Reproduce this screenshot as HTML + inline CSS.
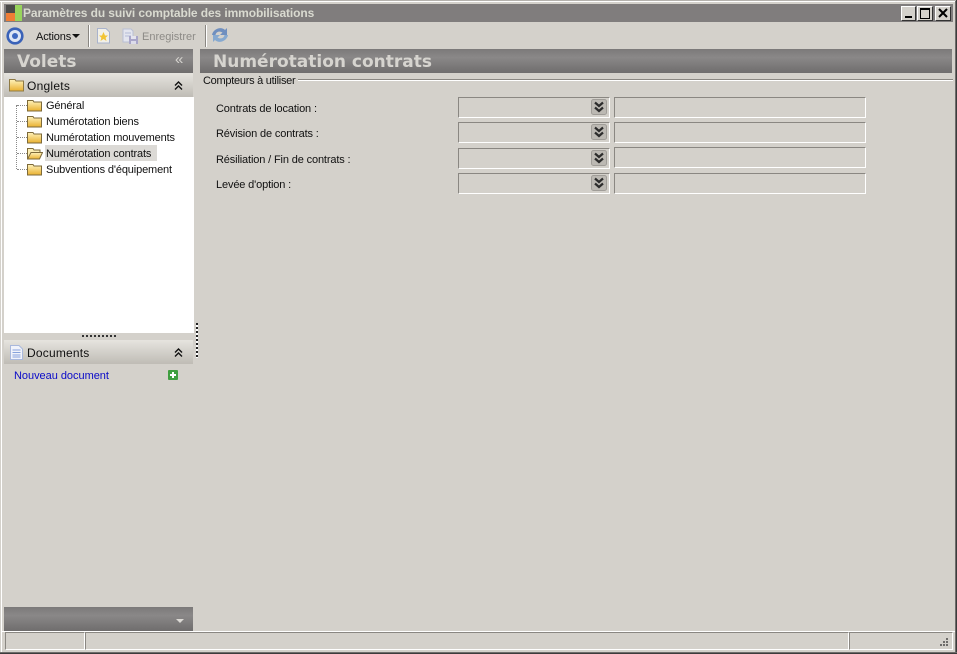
<!DOCTYPE html>
<html><head><meta charset="utf-8">
<style>
html,body{margin:0;padding:0;width:957px;height:654px;overflow:hidden;background:#d4d1cb}
body{position:relative;font-family:"Liberation Sans",sans-serif;font-size:11px;letter-spacing:-.14px;color:#111}
.a{position:absolute}
.t{position:absolute;white-space:nowrap;line-height:14px}
.f{position:absolute;box-sizing:border-box;height:21px;border-top:1px solid #8a8782;border-left:1px solid #8a8782;border-right:1px solid #fff;border-bottom:1px solid #fff}
.hd{position:absolute;background:linear-gradient(#7b7979,#8a8888 35%,#6f6d6d)}
.lt{position:absolute;background:linear-gradient(#e6e4df,#bfbcb5)}
.wb{position:absolute;box-sizing:border-box;width:15px;height:15px;top:6px;background:#d4d1cb;border:1px solid;border-color:#fff #333 #333 #fff}
.sb{position:absolute;top:632px;height:18px;box-sizing:border-box;border-top:1px solid #8a8782;border-left:1px solid #8a8782;border-right:1px solid #fff;border-bottom:1px solid #fff}
.big{font-family:"DejaVu Sans",sans-serif;font-weight:bold;font-size:17px;line-height:22px;color:#d6d4cf;letter-spacing:0}
</style></head>
<body>
<svg width="0" height="0" style="position:absolute"><defs><linearGradient id="g" x1="0" y1="0" x2="0" y2="1"><stop offset="0" stop-color="#fff3bd"/><stop offset="1" stop-color="#e9b02f"/></linearGradient></defs></svg>
<!-- window borders -->
<div class="a" style="left:0;top:0;width:957px;height:1px;background:#b5b2ad"></div>
<div class="a" style="left:0;top:1px;width:957px;height:1px;background:#fff"></div>
<div class="a" style="left:1px;top:1px;width:1px;height:652px;background:#fff"></div>
<div class="a" style="left:955px;top:1px;width:1px;height:652px;background:#6e6c6a"></div>
<div class="a" style="left:956px;top:0;width:1px;height:654px;background:#3c3c3c"></div>
<div class="a" style="left:0;top:652px;width:957px;height:1px;background:#6e6c6a"></div>
<div class="a" style="left:0;top:653px;width:957px;height:1px;background:#3c3c3c"></div>

<!-- title bar -->
<div class="a" style="left:4px;top:4px;width:949px;height:18px;background:#807d7d"></div>
<div class="a" style="left:6px;top:5px;width:9px;height:8px;background:#4a4a48"></div>
<div class="a" style="left:6px;top:13px;width:9px;height:8px;background:#ee7d35"></div>
<div class="a" style="left:15px;top:5px;width:7px;height:16px;background:#98d45c"></div>
<div class="t" style="left:23px;top:6px;font-weight:bold;font-size:12px;color:#d9dad0;letter-spacing:-.1px">Paramètres du suivi comptable des immobilisations</div>
<div class="wb" style="left:901px"><div class="a" style="left:3px;top:9px;width:7px;height:2px;background:#000"></div></div>
<div class="wb" style="left:917px;width:16px"><div class="a" style="left:2px;top:1px;box-sizing:border-box;width:10px;height:11px;border:1px solid #000;border-top-width:2px"></div></div>
<div class="wb" style="left:935px;width:16px"><svg class="a" style="left:0;top:0" width="14" height="13"><path d="M3 2 L11 10 M11 2 L3 10" stroke="#000" stroke-width="2"/></svg></div>

<!-- toolbar -->
<svg class="a" style="left:6px;top:27px" width="18" height="18"><circle cx="9" cy="9" r="7.3" fill="#dfe6f4" stroke="#3a62b8" stroke-width="2.6"/><circle cx="9" cy="9" r="3" fill="#3f68c0"/></svg>
<div class="t" style="left:36px;top:30px">Actions</div>
<div class="a" style="left:72px;top:34px;width:0;height:0;border-left:4px solid transparent;border-right:4px solid transparent;border-top:4px solid #111"></div>
<div class="a" style="left:88px;top:25px;width:1px;height:22px;background:#8a8782"></div>
<div class="a" style="left:89px;top:25px;width:1px;height:22px;background:#fff"></div>
<svg class="a" style="left:96px;top:28px" width="15" height="16"><path d="M1.500 .5H10L13.500 4V15H1.500Z" fill="#f2f0e8" stroke="#a9b3cc"/><path d="M7.500 4L9 7.500H12L9.600 9.800 10.500 13 7.500 11 4.500 13 5.400 9.800 3 7.500H6Z" fill="#f2c433"/></svg>
<svg class="a" style="left:122px;top:28px" width="17" height="17"><path d="M1 1H9L11 3V14H1Z" fill="#e3e5ee" stroke="#b9bfd4"/><path d="M3 5H9M3 8H9" stroke="#b3bcd6"/><rect x="7" y="8" width="9" height="8" fill="#a9a6c9"/><rect x="9" y="8" width="5" height="3" fill="#e4e4ee"/><rect x="9" y="13" width="5" height="3" fill="#dcdcea"/></svg>
<div class="t" style="left:142px;top:30px;color:#8d8b87;letter-spacing:0">Enregistrer</div>
<div class="a" style="left:205px;top:25px;width:1px;height:22px;background:#8a8782"></div>
<div class="a" style="left:206px;top:25px;width:1px;height:22px;background:#fff"></div>
<svg class="a" style="left:211px;top:26px" width="18" height="18"><path d="M1 9C2 3 10 0 14 4L16 2V9H9L11.500 6.500C8 4.500 5 6 4.500 9Z" fill="#6f8fbf"/><path d="M17 9C16 15 8 18 4 14L2 16V9H9L6.500 11.500C10 13.500 13 12 13.500 9Z" fill="#86a9d0"/></svg>

<!-- left pane -->
<div class="hd" style="left:4px;top:49px;width:189px;height:24px"></div>
<div class="t big" style="left:17px;top:51px">Volets</div>
<div class="t" style="left:175px;top:53px;font-size:15px;color:#d6d4cf">«</div>

<div class="lt" style="left:4px;top:73px;width:189px;height:24px"></div>
<svg class="a" style="left:9px;top:78px" width="15" height="14"><path d="M.5 13V1.500H6L7 3H14.500V13Z" fill="url(#g)" stroke="#8f7a44"/></svg>
<div class="t" style="left:27px;top:79px;font-size:12px;letter-spacing:.25px">Onglets</div>
<svg class="a" style="left:174px;top:81px" width="9" height="10"><path d="M1 4.500L4.500 1 8 4.500M1 8.500L4.500 5 8 8.500" fill="none" stroke="#111" stroke-width="1.400"/></svg>

<div class="a" style="left:4px;top:97px;width:190px;height:236px;background:#fff"></div>
<!-- tree dots -->
<div class="a" style="left:16px;top:105px;width:0;height:64px;border-left:1px dotted #8a8a8a"></div>
<div class="a" style="left:17px;top:105px;width:10px;border-top:1px dotted #8a8a8a"></div>
<div class="a" style="left:17px;top:121px;width:10px;border-top:1px dotted #8a8a8a"></div>
<div class="a" style="left:17px;top:137px;width:10px;border-top:1px dotted #8a8a8a"></div>
<div class="a" style="left:17px;top:153px;width:10px;border-top:1px dotted #8a8a8a"></div>
<div class="a" style="left:17px;top:169px;width:10px;border-top:1px dotted #8a8a8a"></div>
<div class="a" style="left:45px;top:145px;width:112px;height:16px;background:#dcdad6"></div>
<svg class="a" style="left:27px;top:99px" width="15" height="13"><path d="M.5 12V1.500H6L7 3H14.500V12Z" fill="url(#g)" stroke="#7d6a3a"/></svg>
<svg class="a" style="left:27px;top:115px" width="15" height="13"><path d="M.5 12V1.500H6L7 3H14.500V12Z" fill="url(#g)" stroke="#7d6a3a"/></svg>
<svg class="a" style="left:27px;top:131px" width="15" height="13"><path d="M.5 12V1.500H6L7 3H14.500V12Z" fill="url(#g)" stroke="#7d6a3a"/></svg>
<svg class="a" style="left:27px;top:147px" width="16" height="13"><path d="M.5 12V1.500H6L7 3H13V6" fill="#fbeeb5" stroke="#7d6a3a"/><path d="M.5 12L4 5.500H15.500L12.500 12Z" fill="url(#g)" stroke="#7d6a3a"/></svg>
<svg class="a" style="left:27px;top:163px" width="15" height="13"><path d="M.5 12V1.500H6L7 3H14.500V12Z" fill="url(#g)" stroke="#7d6a3a"/></svg>
<div class="t" style="left:46px;top:99px;">Général</div>
<div class="t" style="left:46px;top:115px;">Numérotation biens</div>
<div class="t" style="left:46px;top:131px;">Numérotation mouvements</div>
<div class="t" style="left:46px;top:147px;">Numérotation contrats</div>
<div class="t" style="left:46px;top:163px;">Subventions d'équipement</div>

<!-- splitter -->
<div class="a" style="left:82px;top:335px;width:34px;height:2px;background:repeating-linear-gradient(90deg,#333 0 2px,#d4d1cb 2px 4px)"></div>
<div class="a" style="left:196px;top:323px;width:2px;height:35px;background:repeating-linear-gradient(#222 0 2px,#fff 2px 4px)"></div>

<div class="lt" style="left:4px;top:340px;width:189px;height:24px"></div>
<svg class="a" style="left:10px;top:345px" width="13" height="15"><path d="M.5 .5H9L12.500 4V14.500H.5Z" fill="#f1f3fb" stroke="#a9b8dc"/><path d="M2.500 5H10.500M2.500 7.500H10.500M2.500 10H10.500M2.500 12H10.500" stroke="#86a2dc"/></svg>
<div class="t" style="left:27px;top:346px;font-size:12px;letter-spacing:.2px">Documents</div>
<svg class="a" style="left:174px;top:348px" width="9" height="10"><path d="M1 4.500L4.500 1 8 4.500M1 8.500L4.500 5 8 8.500" fill="none" stroke="#111" stroke-width="1.400"/></svg>
<div class="t" style="left:14px;top:369px;color:#0a0ac8;letter-spacing:-.03px">Nouveau document</div>
<div class="a" style="left:168px;top:370px;width:10px;height:10px;background:#3f9e3f;border-radius:1px"></div>
<div class="a" style="left:172px;top:372px;width:2px;height:6px;background:#fff"></div>
<div class="a" style="left:170px;top:374px;width:6px;height:2px;background:#fff"></div>

<div class="hd" style="left:4px;top:607px;width:189px;height:24px"></div>
<div class="a" style="left:176px;top:619px;width:0;height:0;border-left:4px solid transparent;border-right:4px solid transparent;border-top:4px solid #dcdad5"></div>

<!-- right pane -->
<div class="hd" style="left:200px;top:49px;width:752px;height:24px"></div>
<div class="t big" style="left:213px;top:51px">Numérotation contrats</div>

<div class="t" style="left:203px;top:74px;letter-spacing:-.27px">Compteurs à utiliser</div>
<div class="a" style="left:298px;top:79px;width:655px;height:1px;background:#8a8782"></div>
<div class="a" style="left:298px;top:80px;width:655px;height:1px;background:#fff"></div>

<div class="t" style="left:216px;top:102px">Contrats de location :</div>
<div class="t" style="left:216px;top:127px">Révision de contrats :</div>
<div class="t" style="left:216px;top:153px">Résiliation / Fin de contrats :</div>
<div class="t" style="left:216px;top:178px">Levée d'option :</div>

<div class="f" style="left:458px;top:97px;width:152px"></div>
<div class="f" style="left:458px;top:122px;width:152px"></div>
<div class="f" style="left:458px;top:148px;width:152px"></div>
<div class="f" style="left:458px;top:173px;width:152px"></div>
<div class="f" style="left:614px;top:97px;width:252px"></div>
<div class="f" style="left:614px;top:122px;width:252px"></div>
<div class="f" style="left:614px;top:147px;width:252px"></div>
<div class="f" style="left:614px;top:173px;width:252px"></div>

<svg class="a" style="left:591px;top:99px" width="16" height="16"><rect x=".5" y=".5" width="15" height="15" rx="2" fill="#bcb9b3" stroke="#a09d98"/><path d="M4 3.500L8 7 12 3.500M4 8.500L8 12 12 8.500" fill="none" stroke="#2c2c2c" stroke-width="2.200"/></svg>
<svg class="a" style="left:591px;top:124px" width="16" height="16"><rect x=".5" y=".5" width="15" height="15" rx="2" fill="#bcb9b3" stroke="#a09d98"/><path d="M4 3.500L8 7 12 3.500M4 8.500L8 12 12 8.500" fill="none" stroke="#2c2c2c" stroke-width="2.200"/></svg>
<svg class="a" style="left:591px;top:150px" width="16" height="16"><rect x=".5" y=".5" width="15" height="15" rx="2" fill="#bcb9b3" stroke="#a09d98"/><path d="M4 3.500L8 7 12 3.500M4 8.500L8 12 12 8.500" fill="none" stroke="#2c2c2c" stroke-width="2.200"/></svg>
<svg class="a" style="left:591px;top:175px" width="16" height="16"><rect x=".5" y=".5" width="15" height="15" rx="2" fill="#bcb9b3" stroke="#a09d98"/><path d="M4 3.500L8 7 12 3.500M4 8.500L8 12 12 8.500" fill="none" stroke="#2c2c2c" stroke-width="2.200"/></svg>

<!-- status bar -->
<div class="a" style="left:2px;top:631px;width:953px;height:1px;background:#fff"></div>
<div class="sb" style="left:5px;width:80px"></div>
<div class="sb" style="left:85px;width:764px"></div>
<div class="sb" style="left:849px;width:104px"></div>
<svg class="a" style="left:938px;top:637px" width="12" height="12"><path d="M8 1h2v2H8zM5 4h2v2H5zM8 4h2v2H8zM2 7h2v2H2zM5 7h2v2H5zM8 7h2v2H8z" fill="#6e6c6a"/></svg>
</body></html>
